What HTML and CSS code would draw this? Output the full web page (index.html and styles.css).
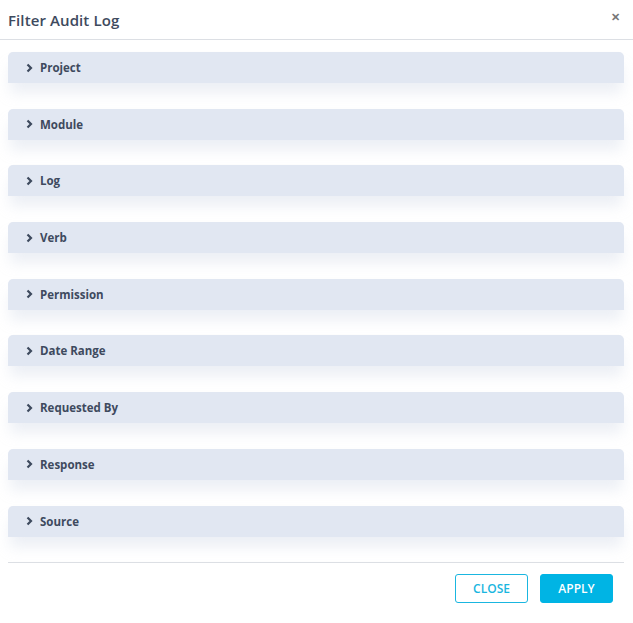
FILE: index.html
```html
<!DOCTYPE html>
<html>
<head>
<meta charset="utf-8">
<link rel="stylesheet" href="styles.css">
</head>
<body>
<div class="dialog">
  <div class="header">
    <h1 class="title">Filter Audit Log</h1>
    <span class="close-x">&#x2715;</span>
  </div>
  <div class="panels">
    <div class="panel"><svg class="chev" viewBox="0 0 7 10" width="7" height="10"><path d="M1.5 1.5 L5 5 L1.5 8.5" fill="none" stroke="currentColor" stroke-width="2.2"/></svg><span>Project</span></div>
    <div class="panel"><svg class="chev" viewBox="0 0 7 10" width="7" height="10"><path d="M1.5 1.5 L5 5 L1.5 8.5" fill="none" stroke="currentColor" stroke-width="2.2"/></svg><span>Module</span></div>
    <div class="panel"><svg class="chev" viewBox="0 0 7 10" width="7" height="10"><path d="M1.5 1.5 L5 5 L1.5 8.5" fill="none" stroke="currentColor" stroke-width="2.2"/></svg><span>Log</span></div>
    <div class="panel"><svg class="chev" viewBox="0 0 7 10" width="7" height="10"><path d="M1.5 1.5 L5 5 L1.5 8.5" fill="none" stroke="currentColor" stroke-width="2.2"/></svg><span>Verb</span></div>
    <div class="panel"><svg class="chev" viewBox="0 0 7 10" width="7" height="10"><path d="M1.5 1.5 L5 5 L1.5 8.5" fill="none" stroke="currentColor" stroke-width="2.2"/></svg><span>Permission</span></div>
    <div class="panel"><svg class="chev" viewBox="0 0 7 10" width="7" height="10"><path d="M1.5 1.5 L5 5 L1.5 8.5" fill="none" stroke="currentColor" stroke-width="2.2"/></svg><span>Date Range</span></div>
    <div class="panel"><svg class="chev" viewBox="0 0 7 10" width="7" height="10"><path d="M1.5 1.5 L5 5 L1.5 8.5" fill="none" stroke="currentColor" stroke-width="2.2"/></svg><span>Requested By</span></div>
    <div class="panel"><svg class="chev" viewBox="0 0 7 10" width="7" height="10"><path d="M1.5 1.5 L5 5 L1.5 8.5" fill="none" stroke="currentColor" stroke-width="2.2"/></svg><span>Response</span></div>
    <div class="panel"><svg class="chev" viewBox="0 0 7 10" width="7" height="10"><path d="M1.5 1.5 L5 5 L1.5 8.5" fill="none" stroke="currentColor" stroke-width="2.2"/></svg><span>Source</span></div>
  </div>
  <div class="footer">
    <button class="btn btn-outline">CLOSE</button>
    <button class="btn btn-primary">APPLY</button>
  </div>
</div>
</body>
</html>
```
FILE: styles.css
```css
* { box-sizing: border-box; }
html, body { margin: 0; padding: 0; background: #fff; }
body { font-family: "Open Sans", "Noto Sans", sans-serif; color: #3e4a5e; }
.dialog { width: 633px; height: 623px; }
.header {
  height: 40px;
  display: flex;
  align-items: center;
  justify-content: space-between;
  padding: 0 13px 0 8px;
  border-bottom: 1px solid #dcdfe4;
}
.title { margin: 0; font-size: 15px; font-weight: 600; color: #3e4a5e; letter-spacing: 0.1px; }
.close-x { font-size: 11px; font-weight: 700; color: #777; margin-top: -6px; }
.panels {
  padding: 12px 9px 0 8px;
  display: flex;
  flex-direction: column;
  gap: 25.7px;
  height: 522px;
}
.panel {
  height: 31px;
  background: #e1e7f2;
  border-radius: 5px 5px 0 0;
  display: flex;
  align-items: center;
  padding-left: 18px;
  gap: 7px;
  font-size: 11.5px;
  font-weight: 700;
  color: #3e4a5e;
  box-shadow: 0 12px 14px -2px rgba(200, 208, 225, 0.35);
}
.chev { color: #3e4a5e; flex: none; }
.footer {
  margin: 0 9px 0 8px;
  border-top: 1px solid #dcdfe4;
  display: flex;
  justify-content: flex-end;
  gap: 12px;
  padding: 11px 11px 0 0;
}
.btn {
  width: 73px;
  height: 29px;
  border-radius: 3px;
  font-family: "Open Sans", sans-serif;
  font-size: 12px;
  font-weight: 600;
  cursor: pointer;
}
.btn-outline { background: #fff; border: 1px solid #1ab6e0; color: #1ab6e0; }
.btn-primary { background: #00b4e4; border: 1px solid #00b4e4; color: #fff; }
```
